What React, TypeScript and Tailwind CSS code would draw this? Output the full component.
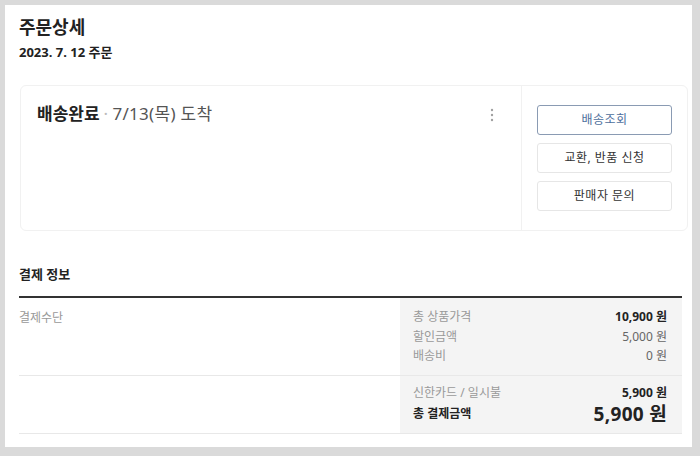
import React from 'react'

const font = { fontFamily: '"Noto Sans", "Noto Sans CJK KR", sans-serif' }

function Kebab() {
  return (
    <svg width="4" height="14" viewBox="0 0 4 14" className="text-[#a0a0a0]">
      <circle cx="2" cy="2" r="1.2" fill="currentColor" />
      <circle cx="2" cy="7" r="1.2" fill="currentColor" />
      <circle cx="2" cy="12" r="1.2" fill="currentColor" />
    </svg>
  )
}

export default function App() {
  return (
    <div
      className="w-[700px] h-[456px] bg-[#dadada] pt-[5px] pl-[5px] pr-[8px] pb-[9px] text-[#222]"
      style={font}
    >
      <div className="bg-white h-full pl-[14px] pt-[10px]">
        <h1 className="text-[18px] font-bold leading-[24px] text-[#222]">주문상세</h1>
        <p className="mt-[4px] text-[13px] font-bold leading-[18px]">2023. 7. 12 주문</p>

        {/* Order card */}
        <div className="mt-[24px] ml-px w-[668px] h-[146px] flex rounded-[6px] border border-[#f1f1f1]">
          <div className="flex-1 flex items-start justify-between pl-[16px] pr-[27px] pt-[17px]">
            <div className="flex items-baseline">
              <span className="text-[17px] font-bold leading-[22px]">배송완료</span>
              <span className="text-[17px] text-[#555] leading-[22px] ml-[4px] tracking-[0.3px]">
                <span className="text-[#bbb] mr-[4px]">·</span>7/13(목) 도착
              </span>
            </div>
            <div className="pt-[5px]">
              <Kebab />
            </div>
          </div>
          <div className="w-[166px] border-l border-[#f1f1f1] px-[15px] pt-[19px] flex flex-col gap-[8px]">
            <button className="h-[30px] rounded-[3px] border border-[#8a9bb3] text-[12px] tracking-[0.5px] text-[#4d6e9c]">
              배송조회
            </button>
            <button className="h-[30px] rounded-[3px] border border-[#e6e6e6] text-[12px] tracking-[0.5px] text-[#333]">
              교환, 반품 신청
            </button>
            <button className="h-[30px] rounded-[3px] border border-[#e6e6e6] text-[12px] tracking-[0.5px] text-[#333]">
              판매자 문의
            </button>
          </div>
        </div>

        <h2 className="mt-[34px] text-[13px] font-bold leading-[18px]">결제 정보</h2>

        <div className="mt-[13px] w-[663px] border-t-2 border-[#333]">
          <div className="flex border-b border-[#e8e8e8]">
            <div className="w-[381px] pt-[10px] text-[12px] text-[#999] leading-[19px]">결제수단</div>
            <div className="flex-1 bg-[#f4f4f4] pl-[13px] pr-[15px] pt-[9px] pb-[9px] text-[12px] leading-[19.5px]">
              <div className="flex justify-between">
                <span className="text-[#999]">총 상품가격</span>
                <span className="font-bold text-[#222]">10,900 원</span>
              </div>
              <div className="flex justify-between">
                <span className="text-[#999]">할인금액</span>
                <span className="text-[#666]">5,000 원</span>
              </div>
              <div className="flex justify-between">
                <span className="text-[#999]">배송비</span>
                <span className="text-[#666]">0 원</span>
              </div>
            </div>
          </div>
          <div className="flex border-b border-[#e8e8e8]">
            <div className="w-[381px]" />
            <div className="flex-1 bg-[#f4f4f4] pl-[13px] pr-[15px] pt-[7px] pb-[7px]">
              <div className="flex justify-between text-[12px] leading-[19px]">
                <span className="text-[#999]">신한카드 / 일시불</span>
                <span className="font-bold text-[#222]">5,900 원</span>
              </div>
              <div className="flex justify-between items-center leading-[24px]">
                <span className="text-[12px] font-bold text-[#222]">총 결제금액</span>
                <span className="text-[19px] font-bold text-[#222] tracking-[0.3px]">5,900 원</span>
              </div>
            </div>
          </div>
        </div>
      </div>
    </div>
  )
}
